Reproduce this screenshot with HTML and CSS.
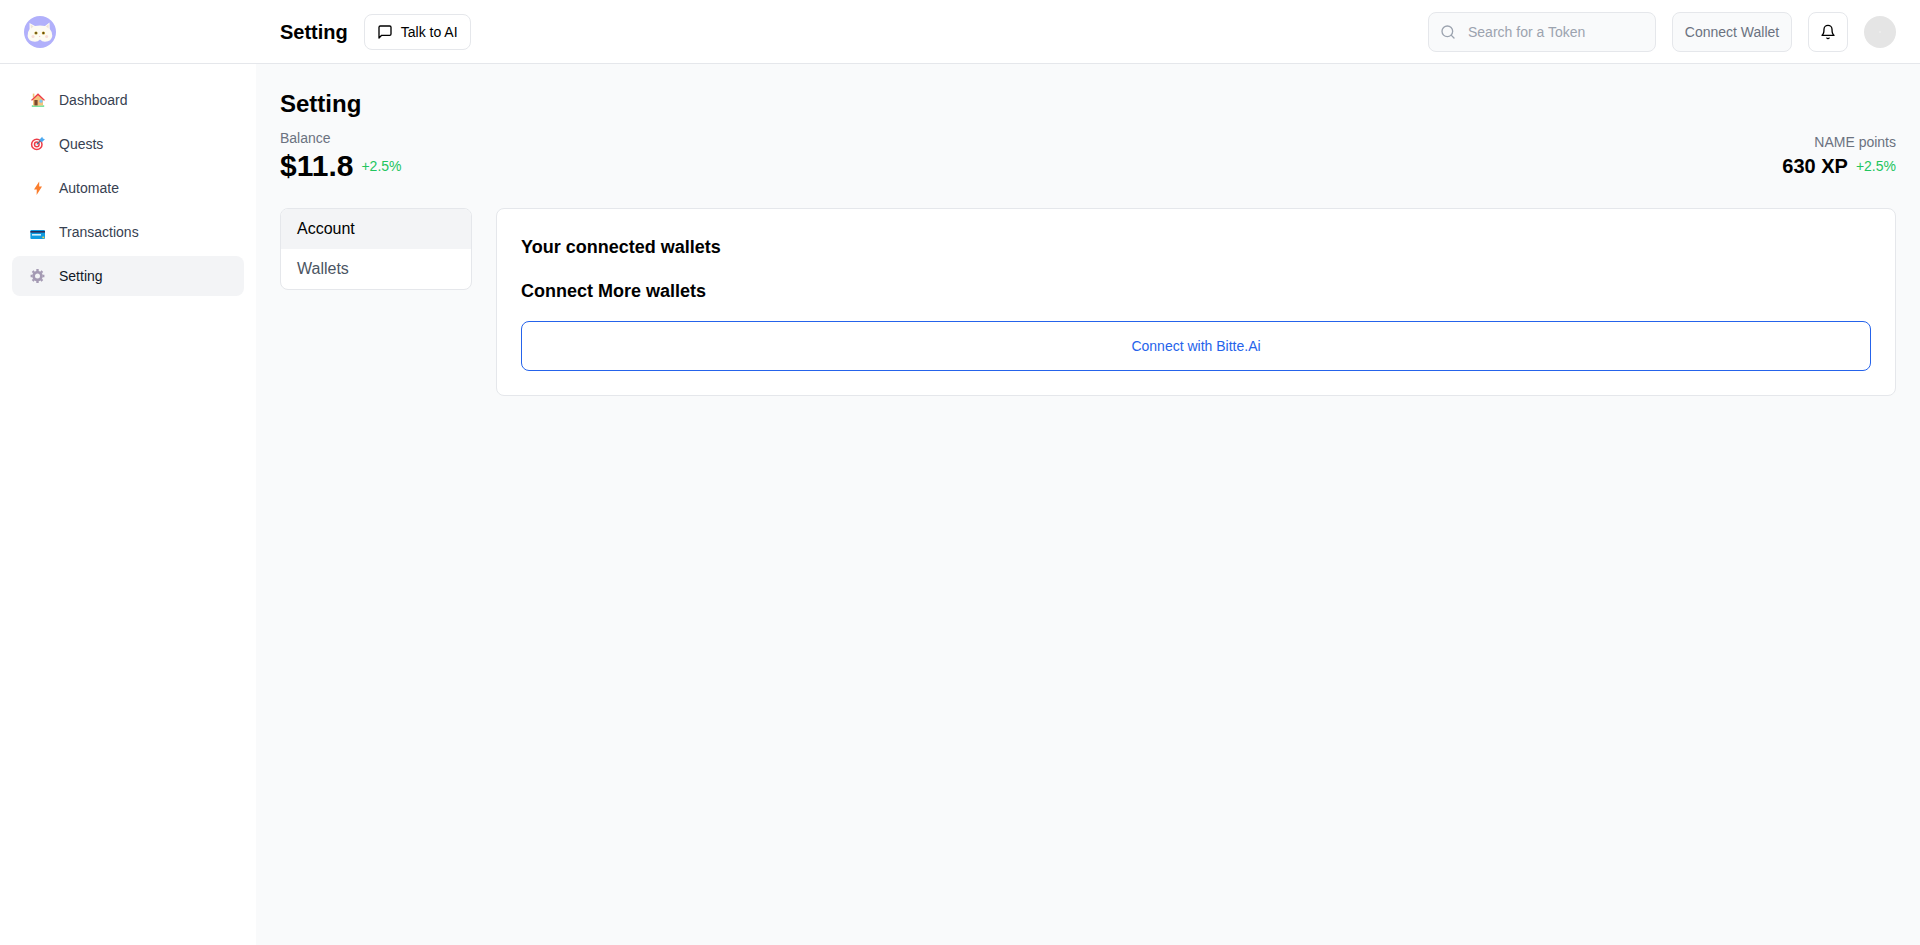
FILE: index.html
```html
<!DOCTYPE html>
<html lang="en">
<head>
<meta charset="utf-8">
<title>Setting</title>
<link rel="stylesheet" href="styles.css">
</head>
<body>
<div class="app">
  <header class="topbar">
    <div class="brand">
      <svg class="logo" viewBox="0 0 32 32" aria-hidden="true">
        <circle cx="16" cy="16" r="16" fill="#b1b0fb"/>
        <path d="M5.5 7 L11 10 Q16 9 21 10 L25.5 6.5 L25.8 13 Q28.6 16 28.3 20 Q27.5 25.5 21 25.8 Q18 25.8 16 23.6 Q14 25.8 11 25.8 Q4.2 25.5 3.6 20 Q3.4 16 5.6 13 Z" fill="#fdfbf3"/>
        <path d="M6.6 8.6 L9.6 10.4 L7 12.4 Z M24.6 8.2 L22 10.4 L24.6 12.4 Z" fill="#efe3d6"/>
        <circle cx="12" cy="17" r="1.6" fill="#b8921a"/>
        <circle cx="19.4" cy="17" r="1.6" fill="#b8921a"/>
        <circle cx="12" cy="17" r=".8" fill="#2a2416"/>
        <circle cx="19.4" cy="17" r=".8" fill="#2a2416"/>
        <circle cx="9" cy="20.6" r="1.5" fill="#f6dcd6"/>
        <circle cx="22.6" cy="20.6" r="1.5" fill="#f6dcd6"/>
        <path d="M14.9 20 h1.6 l-.8 .9 Z" fill="#e9b6ae"/>
      </svg>
    </div>
    <div class="topbar-main">
      <div class="topbar-left">
        <span class="page-name">Setting</span>
        <button class="talk-btn" type="button">
          <svg class="icon-16" viewBox="0 0 24 24" fill="none" stroke="currentColor" stroke-width="2" stroke-linecap="round" stroke-linejoin="round" aria-hidden="true"><path d="M21 15a2 2 0 0 1-2 2H7l-4 4V5a2 2 0 0 1 2-2h14a2 2 0 0 1 2 2z"/></svg>
          <span>Talk to AI</span>
        </button>
      </div>
      <div class="topbar-right">
        <label class="search">
          <svg class="icon-16 search-icon" viewBox="0 0 24 24" fill="none" stroke="currentColor" stroke-width="2" stroke-linecap="round" stroke-linejoin="round" aria-hidden="true"><circle cx="11" cy="11" r="8"/><path d="m21 21-4.3-4.3"/></svg>
          <span class="search-text">Search for a Token</span>
        </label>
        <button class="wallet-btn" type="button">Connect Wallet</button>
        <button class="bell-btn" type="button" aria-label="Notifications">
          <svg class="icon-16" viewBox="0 0 24 24" fill="none" stroke="currentColor" stroke-width="2" stroke-linecap="round" stroke-linejoin="round" aria-hidden="true"><path d="M6 8a6 6 0 0 1 12 0c0 7 3 9 3 9H3s3-2 3-9"/><path d="M10.3 21a1.94 1.94 0 0 0 3.4 0"/></svg>
        </button>
        <span class="avatar"></span>
      </div>
    </div>
  </header>

  <div class="body">
    <nav class="sidebar">
      <a class="nav-item">
        <svg class="nav-icon" viewBox="0 0 16 16" aria-hidden="true">
          <rect x="1.8" y="13.2" width="12.4" height="1.8" fill="#7be3a0"/>
          <rect x="2.8" y="1.6" width="1.6" height="4" fill="#e9c27a"/>
          <path d="M3 7 L8 2.5 L13 7 V13.4 H3 Z" fill="#f4c27d"/>
          <path d="M1 8 L8 1.2 L15 8 L14 8.8 L8 3.2 L2 8.8 Z" fill="#ee3c47"/>
          <rect x="4.4" y="8" width="3.2" height="5.4" fill="#7b4a2e"/>
          <circle cx="11" cy="9.2" r="1.6" fill="#7cc4ee"/>
        </svg>
        <span>Dashboard</span>
      </a>
      <a class="nav-item">
        <svg class="nav-icon" viewBox="0 0 16 16" aria-hidden="true">
          <circle cx="6.8" cy="8.4" r="5.2" fill="none" stroke="#ee3c47" stroke-width="1.5"/>
          <circle cx="6.8" cy="8.4" r="2.3" fill="none" stroke="#ee3c47" stroke-width="1.5"/>
          <path d="M6.8 8.4 L11.6 3.6" stroke="#3d6e92" stroke-width="1.2"/>
          <path d="M9.4 3.8 L12.2 .8 L12.9 2.6 L14.9 3.2 L11.8 6.2 Z" fill="#4aa8f0"/>
        </svg>
        <span>Quests</span>
      </a>
      <a class="nav-item">
        <svg class="nav-icon" viewBox="0 0 16 16" aria-hidden="true">
          <path d="M9.2 1.6 L4 9.4 H6.8 L6.6 15 L12 6.6 H9.2 Z" fill="#fb7d2c"/>
        </svg>
        <span>Automate</span>
      </a>
      <a class="nav-item">
        <svg class="nav-icon" viewBox="0 0 16 16" aria-hidden="true">
          <rect x=".4" y="6" width="14.6" height="9" rx="1" fill="#0f9be0"/>
          <rect x=".4" y="7" width="14.6" height="1.6" fill="#2c2b57"/>
          <rect x="2" y="10" width="9" height="1.6" fill="#d6eefb"/>
          <rect x="12.4" y="12.6" width="1.8" height="1.6" fill="#f4d54a"/>
        </svg>
        <span>Transactions</span>
      </a>
      <a class="nav-item nav-item-active">
        <svg class="nav-icon" viewBox="0 0 16 16" aria-hidden="true">
          <circle cx="7.5" cy="8" r="3.9" fill="none" stroke="#a49ab3" stroke-width="2.8"/>
          <path d="M7.5 1.1 V3 M7.5 13 V14.9 M.6 8 H2.5 M12.5 8 H14.4 M12.4 3.1 L11 4.5 M2.6 3.1 L4 4.5 M12.4 12.9 L11 11.5 M2.6 12.9 L4 11.5" fill="none" stroke="#a49ab3" stroke-width="2.4"/>
        </svg>
        <span>Setting</span>
      </a>
    </nav>

    <main class="content">
      <h1 class="title">Setting</h1>
      <div class="stats">
        <div class="stat">
          <div class="stat-label">Balance</div>
          <div class="stat-row">
            <span class="stat-value">$11.8</span>
            <span class="stat-change">+2.5%</span>
          </div>
        </div>
        <div class="stat stat-right">
          <div class="stat-label">NAME points</div>
          <div class="stat-row">
            <span class="stat-value-sm">630 XP</span>
            <span class="stat-change">+2.5%</span>
          </div>
        </div>
      </div>
      <div class="panels">
        <div class="tabs">
          <div class="tab tab-active">Account</div>
          <div class="tab">Wallets</div>
        </div>
        <section class="card">
          <h2 class="card-heading">Your connected wallets</h2>
          <h2 class="card-heading">Connect More wallets</h2>
          <button class="bitte-btn" type="button">Connect with Bitte.Ai</button>
        </section>
      </div>
    </main>
  </div>
</div>
</body>
</html>
```

FILE: styles.css
```css
* { box-sizing: border-box; }
html, body { margin: 0; height: 100%; }
body {
  font-family: "Liberation Sans", Arial, sans-serif;
  color: #000;
  background: #fff;
  overflow: hidden;
}
button { font: inherit; cursor: pointer; }
h1, h2 { margin: 0; }

.app { display: flex; flex-direction: column; height: 945px; }

.topbar {
  display: flex;
  height: 64px;
  flex: none;
  background: #fff;
  border-bottom: 1px solid #e5e7eb;
}
.brand {
  width: 256px;
  flex: none;
  padding: 16px 24px 0;
}
.logo { display: block; width: 32px; height: 32px; }
.topbar-main {
  flex: 1;
  display: flex;
  align-items: center;
  justify-content: space-between;
  padding: 0 24px;
}
.topbar-left { display: flex; align-items: center; gap: 16px; }
.page-name { font-size: 20px; font-weight: 700; line-height: 28px; }
.icon-16 { display: block; width: 16px; height: 16px; flex: none; }

.talk-btn {
  display: flex;
  align-items: center;
  gap: 8px;
  width: 107px;
  height: 36px;
  padding: 0 12px;
  background: #fff;
  border: 1px solid #e5e7eb;
  border-radius: 8px;
  font-size: 14px;
  color: #000;
}
.topbar-right { display: flex; align-items: center; gap: 16px; }
.search {
  display: flex;
  align-items: center;
  gap: 12px;
  width: 228px;
  height: 40px;
  padding: 0 11px;
  background: #f9fafb;
  border: 1px solid #e5e7eb;
  border-radius: 8px;
  font-size: 14px;
}
.search-icon { color: #9ca3af; }
.search-text { color: #9ca3af; }
.wallet-btn {
  width: 120px;
  height: 40px;
  padding: 0;
  background: #f9fafb;
  border: 1px solid #e5e7eb;
  border-radius: 8px;
  font-size: 14px;
  color: #6b7280;
}
.bell-btn {
  display: flex;
  align-items: center;
  justify-content: center;
  width: 40px;
  height: 40px;
  padding: 0;
  background: #fff;
  border: 1px solid #e5e7eb;
  border-radius: 8px;
  color: #000;
}
.avatar {
  display: flex;
  align-items: center;
  justify-content: center;
  width: 32px;
  height: 32px;
  border-radius: 50%;
  background: #e5e5e5;
}
.avatar::after {
  content: "";
  width: 2px;
  height: 2px;
  border-radius: 50%;
  background: #eeeeee;
}

.body { display: flex; flex: 1; min-height: 0; }
.sidebar {
  width: 256px;
  flex: none;
  display: flex;
  flex-direction: column;
  gap: 4px;
  padding: 16px 12px;
  background: #fff;
}
.nav-item {
  display: flex;
  align-items: center;
  gap: 13px;
  height: 40px;
  padding: 0 16px 0 18px;
  border-radius: 8px;
  font-size: 14px;
  color: #374151;
}
.nav-icon { display: block; width: 16px; height: 16px; flex: none; }
.nav-item-active { background: #f3f4f6; color: #111827; }

.content {
  flex: 1;
  min-width: 0;
  padding: 24px;
  background: #f9fafb;
}
.title { font-size: 24px; line-height: 32px; font-weight: 700; }
.stats {
  display: flex;
  align-items: center;
  justify-content: space-between;
  margin-top: 8px;
}
.stat-label { font-size: 14px; line-height: 20px; color: #6b7280; }
.stat-row { display: flex; align-items: center; gap: 8px; }
.stat-value { font-size: 30px; line-height: 36px; font-weight: 700; }
.stat-value-sm { font-size: 20px; line-height: 28px; font-weight: 700; }
.stat-change { font-size: 14px; line-height: 20px; color: #22c55e; }
.stat-right { text-align: right; }
.stat-right .stat-row { justify-content: flex-end; }

.panels {
  display: flex;
  align-items: flex-start;
  gap: 24px;
  margin-top: 24px;
}
.tabs {
  width: 192px;
  flex: none;
  overflow: hidden;
  background: #fff;
  border: 1px solid #e5e7eb;
  border-radius: 8px;
}
.tab {
  height: 40px;
  padding: 0 16px;
  font-size: 16px;
  line-height: 40px;
  color: #4b5563;
}
.tab-active { background: #f3f4f6; color: #000; }
.card {
  flex: 1;
  min-width: 0;
  padding: 24px;
  background: #fff;
  border: 1px solid #e5e7eb;
  border-radius: 8px;
}
.card-heading { font-size: 18px; line-height: 28px; font-weight: 700; margin-bottom: 16px; }
.bitte-btn {
  display: block;
  width: 100%;
  height: 50px;
  padding: 0;
  background: #fff;
  border: 1px solid #2563eb;
  border-radius: 8px;
  font-size: 14px;
  color: #2563eb;
}
```
